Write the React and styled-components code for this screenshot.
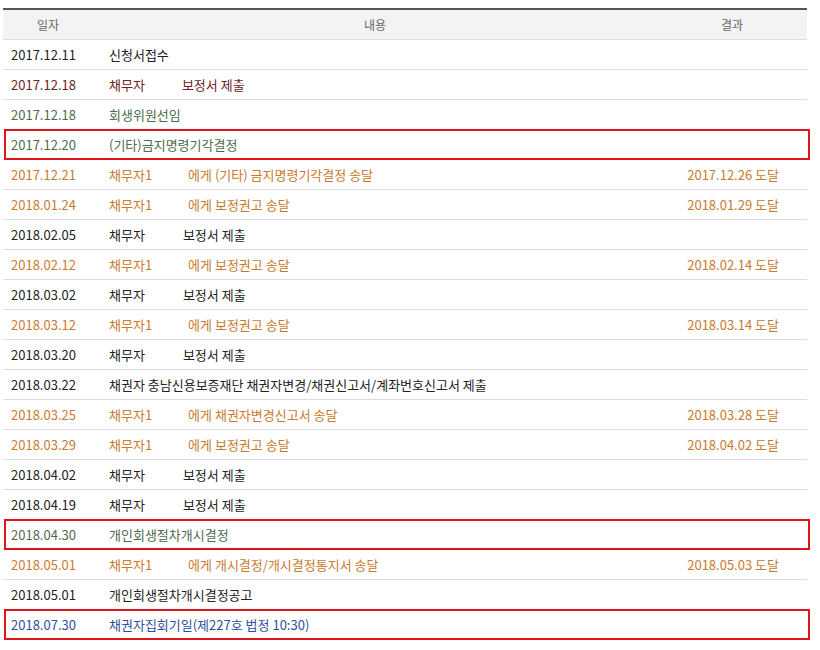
import React from "react";
import styled, { createGlobalStyle } from "styled-components";

const G = createGlobalStyle`
  body { margin: 0; background: #fff; font-family: "Noto Sans CJK KR", "Noto Sans", sans-serif; }
`;
const C = { k: "#222", m: "#6b2323", g: "#4d6b4d", o: "#c87a30", b: "#2f4f9c" };

const Table = styled.div`
  width: 804px; margin: 8px 0 0 3px; border-top: 2px solid #555;
`;
const Head = styled.div`
  display: grid; grid-template-columns: 90px 1fr 150px; height: 29px; align-items: center;
  background: #f3f3f3; color: #666; font-size: 12px; text-align: center; border-bottom: 1px solid #ddd;
`;
const Row = styled.div`
  position: relative; display: grid; grid-template-columns: 98px 1fr 180px; height: 29px;
  align-items: center; border-bottom: 1px solid #ddd; font-size: 13px; color: ${p => p.c};
  padding-left: 8px;
  ${p => p.hl && `&::after{content:"";position:absolute;left:1px;right:-3px;top:-1px;bottom:-1px;border:2.5px solid #e0141c;}`}
`;
const Res = styled.span` text-align: right; padding-right: 28px; `;
const Gap = styled.span` display: inline-block; width: ${p => p.w}px; `;

const rows = [
  ["2017.12.11", "k", ["신청서접수"]],
  ["2017.12.18", "m", ["채무자", 37, "보정서 제출"]],
  ["2017.12.18", "g", ["회생위원선임"]],
  ["2017.12.20", "g", ["(기타)금지명령기각결정"], "", 1],
  ["2017.12.21", "o", ["채무자1", 36, "에게 (기타) 금지명령기각결정 송달"], "2017.12.26 도달"],
  ["2018.01.24", "o", ["채무자1", 36, "에게 보정권고 송달"], "2018.01.29 도달"],
  ["2018.02.05", "k", ["채무자", 38, "보정서 제출"]],
  ["2018.02.12", "o", ["채무자1", 36, "에게 보정권고 송달"], "2018.02.14 도달"],
  ["2018.03.02", "k", ["채무자", 38, "보정서 제출"]],
  ["2018.03.12", "o", ["채무자1", 36, "에게 보정권고 송달"], "2018.03.14 도달"],
  ["2018.03.20", "k", ["채무자", 38, "보정서 제출"]],
  ["2018.03.22", "k", ["채권자 충남신용보증재단 채권자변경/채권신고서/계좌번호신고서 제출"]],
  ["2018.03.25", "o", ["채무자1", 36, "에게 채권자변경신고서 송달"], "2018.03.28 도달"],
  ["2018.03.29", "o", ["채무자1", 36, "에게 보정권고 송달"], "2018.04.02 도달"],
  ["2018.04.02", "k", ["채무자", 38, "보정서 제출"]],
  ["2018.04.19", "k", ["채무자", 38, "보정서 제출"]],
  ["2018.04.30", "g", ["개인회생절차개시결정"], "", 1],
  ["2018.05.01", "o", ["채무자1", 36, "에게 개시결정/개시결정통지서 송달"], "2018.05.03 도달"],
  ["2018.05.01", "k", ["개인회생절차개시결정공고"]],
  ["2018.07.30", "b", ["채권자집회기일(제227호 법정 10:30)"], "", 1],
];

export default function App() {
  return (
    <>
      <G />
      <Table>
        <Head><span>일자</span><span>내용</span><span>결과</span></Head>
        {rows.map(([d, c, parts, r, hl], i) => (
          <Row key={i} c={C[c]} hl={hl}>
            <span>{d}</span>
            <span>{parts.map((p, j) => typeof p === "number" ? <Gap key={j} w={p} /> : <span key={j}>{p}</span>)}</span>
            <Res>{r}</Res>
          </Row>
        ))}
      </Table>
    </>
  );
}
